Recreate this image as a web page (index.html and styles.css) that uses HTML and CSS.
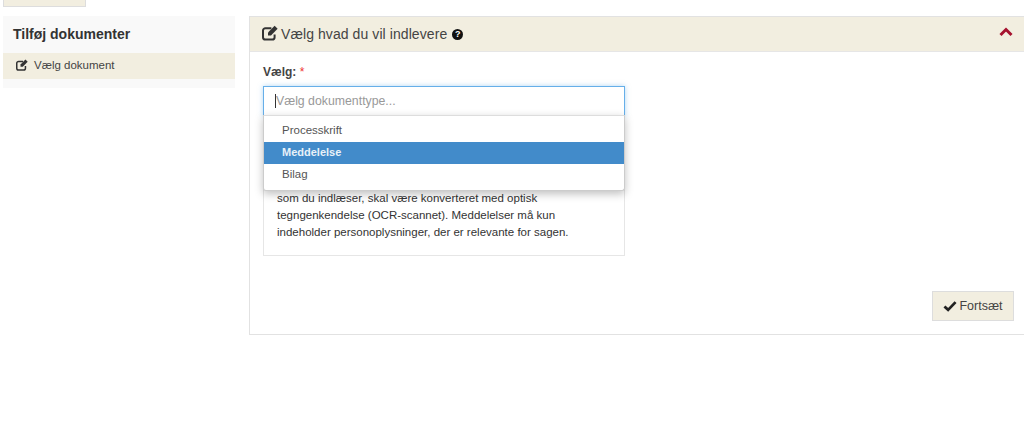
FILE: index.html
```html
<!DOCTYPE html>
<html lang="da">
<head>
<meta charset="utf-8">
<title>Tilføj dokumenter</title>
<link rel="stylesheet" href="styles.css">
</head>
<body>
<svg class="defs" width="0" height="0" aria-hidden="true">
  <symbol id="edit" viewBox="0 0 16 16">
    <path d="M12.6 9.4v2.8a2.4 2.4 0 0 1-2.4 2.4H3.4A2.4 2.4 0 0 1 1 12.2V5.6a2.4 2.4 0 0 1 2.4-2.4h6" fill="none" stroke="currentColor" stroke-width="2"/>
    <path d="M6 7.4 6 10.4 9 10.4 15.6 3.8 12.6 0.8Z" fill="currentColor"/>
  </symbol>
</svg>
<div class="topbar"><div class="topbtn"></div></div>
<div class="layout">
  <aside class="sidebar">
    <h2 class="side-title">Tilføj dokumenter</h2>
    <div class="side-item"><svg class="ico-sm"><use href="#edit"/></svg><span>Vælg dokument</span></div>
  </aside>
  <main class="panel">
    <header class="panel-head">
      <div class="panel-title">
        <svg class="ico-lg"><use href="#edit"/></svg>
        <span>Vælg hvad du vil indlevere</span>
        <span class="help">?</span>
      </div>
      <svg class="chev" viewBox="0 0 14 10"><path d="M1.5 8 7 2.5 12.5 8" fill="none" stroke="#a6122f" stroke-width="3"/></svg>
    </header>
    <div class="panel-body">
      <div class="field">
        <label class="lbl">Vælg: <span class="req">*</span></label>
        <div class="select">
          <div class="select-input"><span class="caret"></span>Vælg dokumenttype...</div>
          <ul class="menu">
            <li>Processkrift</li>
            <li class="active">Meddelelse</li>
            <li class="last">Bilag</li>
          </ul>
        </div>
        <div class="info">
          <p>som du indlæser, skal være konverteret med optisk tegngenkendelse (OCR-scannet). Meddelelser må kun indeholder personoplysninger, der er relevante for sagen.</p>
        </div>
      </div>
      <div class="actions">
        <button class="btn" type="button"><svg class="check" viewBox="0 0 16 14"><path d="M1.5 7.5 5.8 11.5 14.5 2.5" fill="none" stroke="#222" stroke-width="3.2"/></svg>Fortsæt</button>
      </div>
    </div>
  </main>
</div>
</body>
</html>
```
FILE: styles.css
```css
* { box-sizing: border-box; }
html, body { margin: 0; padding: 0; background: #fff; overflow: hidden; }
body { width: 1024px; height: 439px; font-family: "Liberation Sans", Arial, sans-serif; font-size: 12px; color: #333; }
.defs { position: absolute; }
.topbar { height: 16px; padding-left: 3px; }
.topbtn { width: 83px; height: 7px; background: #f2eee0; border: 1px solid #ddd; border-top: 0; }
.layout { display: flex; align-items: flex-start; padding-left: 3px; gap: 14px; }
.sidebar { width: 232px; height: 72px; background: #f9f9f9; flex: none; }
.side-title { margin: 0; height: 37px; padding: 9px 0 0 10px; font-size: 14px; line-height: 18px; font-weight: bold; color: #333; }
.side-item { height: 26px; background: #f2eee0; display: flex; align-items: center; padding-left: 13px; gap: 6px; color: #444; font-size: 11.5px; padding-bottom: 2px; }
.ico-sm { width: 12px; height: 12px; color: #333; }
.panel { flex: 1; height: 319px; border: 1px solid #e2e2e2; border-right: 0; display: flex; flex-direction: column; }
.panel-head { height: 35px; background: #f2eee0; border-bottom: 1px solid #e6e6e6; display: flex; align-items: center; justify-content: space-between; padding: 0 11px 0 12px; }
.panel-title { display: flex; align-items: center; font-size: 14px; letter-spacing: .08px; color: #444; }
.ico-lg { width: 16px; height: 16px; color: #333; margin: -2px 3px 0 0; }
.help { width: 11px; height: 11px; margin-left: 5px; border-radius: 50%; background: #111; color: #fff; font-size: 9px; font-weight: bold; line-height: 11px; text-align: center; letter-spacing: 0; }
.chev { width: 14px; height: 10px; margin-top: -4px; }
.panel-body { flex: 1; padding: 13px 10px 13px 13px; display: flex; flex-direction: column; }
.field { width: 362px; }
.lbl { display: block; height: 21px; font-weight: bold; font-size: 12px; line-height: 14px; color: #444; }
.req { color: #e33; font-weight: normal; }
.select { position: relative; }
.select-input { height: 30px; border: 1px solid #66afe9; box-shadow: 0 0 5px rgba(102,175,233,.5); background: #fff; font-size: 12.3px; line-height: 28px; padding-left: 11px; color: #999; }
.caret { display: inline-block; width: 1px; height: 14px; background: #333; vertical-align: -3px; }
.menu { position: absolute; z-index: 2; left: 0; right: 0; top: 29px; margin: 0; padding: 4px 0 4px; list-style: none; background: #fff; border: 1px solid #ccc; border-top-color: #ddd; border-radius: 0 0 3px 3px; box-shadow: 0 3px 8px rgba(0,0,0,.25); }
.menu li { height: 22px; line-height: 21px; padding-left: 18px; color: #555; font-size: 11.5px; }
.menu li.active { background: #428bca; color: #e8f1f8; font-weight: bold; font-size: 11px; line-height: 20px; }
.menu li.last { line-height: 20px; }
.info { margin-top: 60px; height: 80px; border: 1px solid #e6e6e6; border-top: 0; padding: 0 13px; font-size: 11.5px; line-height: 17px; color: #333; }
.info p { margin: 0; padding-top: 14px; }
.actions { margin-top: auto; display: flex; justify-content: flex-end; }
.btn { height: 30px; width: 82px; background: #f2eee0; border: 1px solid #ddd; font: 12px "Liberation Sans", Arial, sans-serif; font-size: 12.5px; color: #444; display: flex; align-items: center; justify-content: center; gap: 2px; padding: 0; }
.check { width: 14px; height: 12px; }
```
